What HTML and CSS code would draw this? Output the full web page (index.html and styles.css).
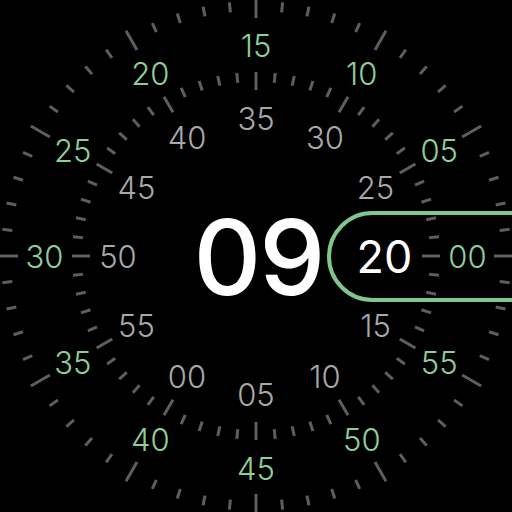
FILE: index.html
```html
<!DOCTYPE html>
<html>
<head>
<meta charset="utf-8">
<link rel="stylesheet" href="styles.css">
</head>
<body>
<div class="face">
  <svg class="ticks" viewBox="0 0 512 512" width="512" height="512">
    <defs>
      <g id="minor">
        <line x1="501" y1="256" x2="511" y2="256"/>
        <line x1="430" y1="256" x2="440" y2="256"/>
      </g>
      <g id="five">
        <line x1="494" y1="256" x2="516" y2="256"/>
        <line x1="422" y1="256" x2="440" y2="256"/>
        <use href="#minor" transform="rotate(6 256 256)"/>
        <use href="#minor" transform="rotate(12 256 256)"/>
        <use href="#minor" transform="rotate(18 256 256)"/>
        <use href="#minor" transform="rotate(24 256 256)"/>
      </g>
    </defs>
    <g class="tick-lines">
      <use href="#five"/>
      <use href="#five" transform="rotate(30 256 256)"/>
      <use href="#five" transform="rotate(60 256 256)"/>
      <use href="#five" transform="rotate(90 256 256)"/>
      <use href="#five" transform="rotate(120 256 256)"/>
      <use href="#five" transform="rotate(150 256 256)"/>
      <use href="#five" transform="rotate(180 256 256)"/>
      <use href="#five" transform="rotate(210 256 256)"/>
      <use href="#five" transform="rotate(240 256 256)"/>
      <use href="#five" transform="rotate(270 256 256)"/>
      <use href="#five" transform="rotate(300 256 256)"/>
      <use href="#five" transform="rotate(330 256 256)"/>
    </g>
  </svg>

  <div class="ring ring-seconds">
    <span class="label" style="left:467.5px;top:256px">00</span>
    <span class="label" style="left:439.2px;top:150.3px">05</span>
    <span class="label" style="left:361.8px;top:72.8px">10</span>
    <span class="label" style="left:256px;top:44.5px">15</span>
    <span class="label" style="left:150.3px;top:72.8px">20</span>
    <span class="label" style="left:72.8px;top:150.3px">25</span>
    <span class="label" style="left:44.5px;top:256px">30</span>
    <span class="label" style="left:72.8px;top:361.8px">35</span>
    <span class="label" style="left:150.3px;top:439.2px">40</span>
    <span class="label" style="left:256px;top:467.5px">45</span>
    <span class="label" style="left:361.8px;top:439.2px">50</span>
    <span class="label" style="left:439.2px;top:361.8px">55</span>
  </div>

  <div class="ring ring-minutes">
    <span class="label" style="left:375.5px;top:187px">25</span>
    <span class="label" style="left:325px;top:136.5px">30</span>
    <span class="label" style="left:256px;top:118px">35</span>
    <span class="label" style="left:187px;top:136.5px">40</span>
    <span class="label" style="left:136.5px;top:187px">45</span>
    <span class="label" style="left:118px;top:256px">50</span>
    <span class="label" style="left:136.5px;top:325px">55</span>
    <span class="label" style="left:187px;top:375.5px">00</span>
    <span class="label" style="left:256px;top:394px">05</span>
    <span class="label" style="left:325px;top:375.5px">10</span>
    <span class="label" style="left:375.5px;top:325px">15</span>
  </div>

  <div class="pill"></div>
  <span class="minute">20</span>

  <div class="hour">09</div>
</div>
</body>
</html>
```

FILE: styles.css
```css
html, body {
  margin: 0;
  padding: 0;
  background: #000;
}

.face {
  position: relative;
  width: 512px;
  height: 512px;
  overflow: hidden;
  background: #000;
  display: flex;
  align-items: center;
  justify-content: center;
  font-family: "Inter", "Roboto", "Liberation Sans", sans-serif;
}

.ticks {
  position: absolute;
  left: 0;
  top: 0;
}

.tick-lines {
  stroke: #5e5e5e;
  stroke-width: 3;
  stroke-linecap: butt;
}

.ring {
  position: absolute;
  inset: 0;
}

.label {
  position: absolute;
  transform: translate(-50%, -50%);
  line-height: 1;
  font-size: 31px;
  font-weight: 300;
  white-space: nowrap;
}

.ring-seconds .label {
  color: #8ccf99;
}

.ring-minutes .label {
  color: #a8a8a8;
}

.pill {
  position: absolute;
  left: 327px;
  top: 211px;
  width: 240px;
  height: 83px;
  border: 4px solid #7fc78c;
  border-radius: 46px;
}

.minute {
  position: absolute;
  left: 384.5px;
  top: 256px;
  transform: translate(-50%, -50%);
  line-height: 1;
  font-size: 45px;
  font-weight: 400;
  color: #fff;
}

.hour {
  position: relative;
  line-height: 1;
  font-size: 105px;
  font-weight: 500;
  color: #fff;
  letter-spacing: -2px;
  margin-left: 5px;
}
```
